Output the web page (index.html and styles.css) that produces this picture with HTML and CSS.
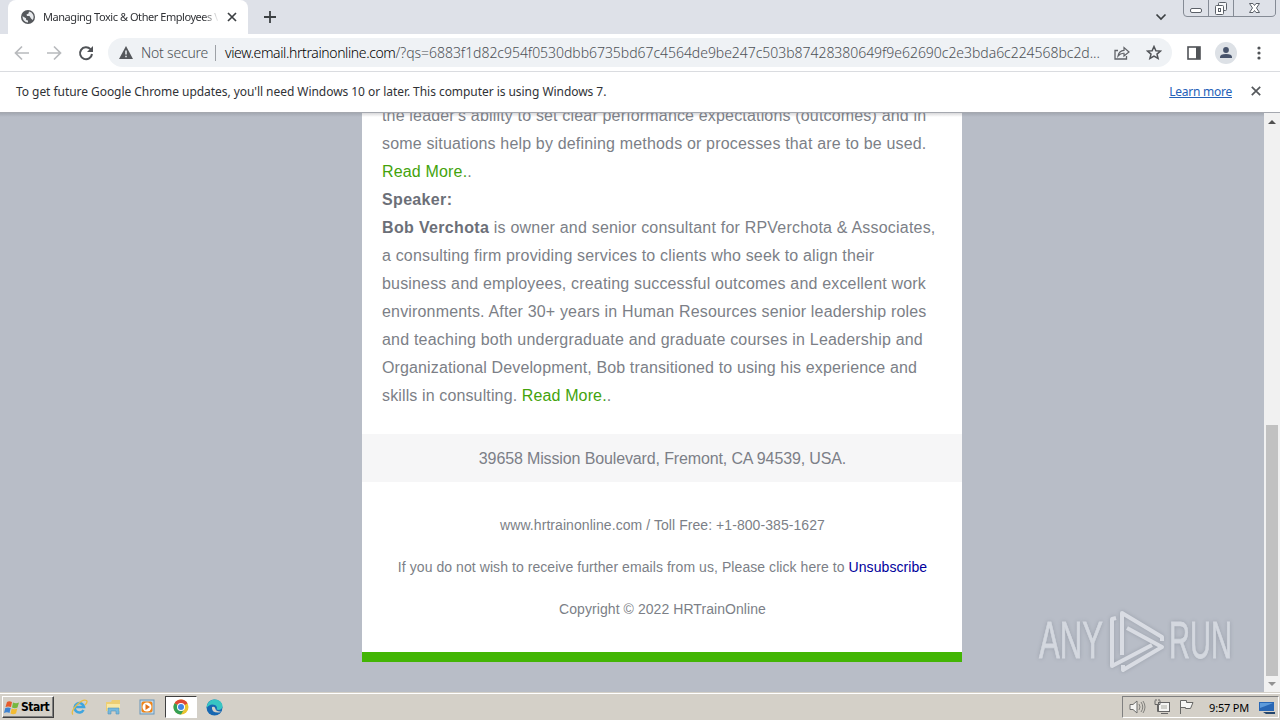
FILE: index.html
```html
<!DOCTYPE html>
<html lang="en">
  <head>
    <meta charset="utf-8" />
    <title>Managing Toxic &amp; Other Employees</title>
    <link rel="stylesheet" href="styles.css">
  </head>
  <body>
    <!-- tab strip -->
    <header class="tabstrip">
      <div class="tab">
        <svg class="globe" width="14" height="14" viewBox="0 0 14 14"><circle cx="7" cy="7" r="7" fill="#55585c"/><path d="M1.6 6.2L5 8.200 5.200 10 7 10.500V12.600A5.600 5.600 0 0 1 1.600 6.200ZM8 1.500L7.500 3.500 5.500 4.500 6 6H8.500L10 8.500 11.700 10A5.600 5.600 0 0 0 8 1.500Z" fill="#e8eaed"/></svg>
        <span class="tab-title">Managing Toxic &amp; Other Employees V</span>
        <svg width="10" height="10" viewBox="0 0 10 10"><path d="M1 1L9 9M9 1L1 9" stroke="#3c4043" stroke-width="1.700"/></svg>
      </div>
      <svg class="new-tab" width="12" height="12" viewBox="0 0 12 12"><path d="M6 0V12M0 6H12" stroke="#3c4043" stroke-width="1.800"/></svg>
      <svg class="tab-search" width="12" height="8" viewBox="0 0 12 8"><path d="M1.500 1.500L6 6L10.500 1.500" fill="none" stroke="#3c4043" stroke-width="1.700"/></svg>
      <svg class="win-buttons" width="94" height="18" viewBox="0 0 94 18">
        <path d="M.5 0V13Q.5 16.500 4 16.500H88Q92.500 16.500 92.500 13V0M25.500 0V16M50.500 0V16" fill="none" stroke="#858b95"/>
        <rect x="7.500" y="8.500" width="11" height="4" rx="1.500" fill="#fff" stroke="#5b6068"/>
        <rect x="35.500" y="2.500" width="8" height="8" rx="1" fill="#f5f6f8" stroke="#5b6068"/>
        <rect x="32.500" y="5.500" width="8" height="9" rx="1" fill="#fff" stroke="#5b6068"/>
        <rect x="35.500" y="8.500" width="2" height="3" fill="none" stroke="#5b6068"/>
        <path d="M66.500 3.500H70L71.500 5.500 73 3.500H76.500L73.500 8 76.500 12.500H73L71.500 10.500 70 12.500H66.500L69.500 8Z" fill="#fff" stroke="#5b6068"/>
      </svg>
    </header>

    <!-- toolbar -->
    <div class="toolbar">
      <svg class="nav" width="90" height="18" viewBox="0 0 90 18">
        <path d="M15 9H2M8 2.500L1.500 9L8 15.500" fill="none" stroke="#b8babd" stroke-width="1.700"/>
        <path d="M33 9H46M40 2.500L46.500 9L40 15.500" fill="none" stroke="#b8babd" stroke-width="1.700"/>
        <path d="M76.500 5.200A6 6 0 1 0 78 10" fill="none" stroke="#505357" stroke-width="2"/><path d="M79 2V8H73Z" fill="#505357"/>
      </svg>
      <div class="omnibox">
        <svg width="14" height="13" viewBox="0 0 14 13"><path d="M7 0L14 13H0Z" fill="#55585c"/><path d="M7 4.500V8.500M7 9.700V11.300" stroke="#f0f3f6" stroke-width="1.500"/></svg>
        <span class="not-secure">Not secure</span>
        <span class="divider"></span>
        <span class="url"><span class="host">view.email.hrtrainonline.com</span><span class="query">/?qs=6883f1d82c954f0530dbb6735bd67c4564de9be247c503b87428380649f9e62690c2e3bda6c224568bc2d...</span></span>
        <svg class="share" width="16" height="14" viewBox="0 0 16 14"><path d="M4 4.500H1V13H12.500V10" fill="none" stroke="#606368" stroke-width="1.300"/><path d="M4 10Q5 4.500 10 4.300V1.500L15 6L10 10V7.300Q6.500 7 4 10Z" fill="none" stroke="#606368" stroke-width="1.200"/></svg>
        <svg class="star" width="16" height="15" viewBox="0 0 16 15"><path d="M8 1.500L9.900 5.700 14.500 6.100 11 9.100 12.100 13.500 8 11.200 3.900 13.500 5 9.100 1.500 6.100 6.100 5.700Z" fill="none" stroke="#505357" stroke-width="1.500"/></svg>
      </div>
      <svg class="panel-icon" width="14" height="14" viewBox="0 0 14 14"><rect x="1" y="1" width="12" height="12" fill="#fff" stroke="#505357" stroke-width="1.600"/><path d="M9 1H13V13H9Z" fill="#505357"/></svg>
      <svg class="avatar" width="22" height="22" viewBox="0 0 22 22"><circle cx="11" cy="11" r="11" fill="#dde1e6"/><circle cx="11" cy="8" r="2.900" fill="#47536b"/><path d="M5 16V15Q5 12 11 12T17 15V16Z" fill="#47536b"/></svg>
      <svg class="dots" width="4" height="14" viewBox="0 0 4 14"><g fill="#505357"><circle cx="2" cy="2" r="1.600"/><circle cx="2" cy="7" r="1.600"/><circle cx="2" cy="12" r="1.600"/></g></svg>
    </div>

    <!-- update notice -->
    <div class="infobar">
      <span class="notice">To get future Google Chrome updates, you'll need Windows 10 or later. This computer is using Windows 7.</span>
      <a class="learn-more">Learn more</a>
      <svg width="10" height="10" viewBox="0 0 10 10"><path d="M.8 .8L9.200 9.200M9.200 .8L.8 9.200" stroke="#55585c" stroke-width="1.700"/></svg>
    </div>

    <main class="viewport">
      <div class="page">
        <div class="mail">
          <div class="mail-body">
            the leader's ability to set clear performance expectations (outcomes) and in<br>
            some situations help by defining methods or processes that are to be used.<br>
            <a class="read-more">Read More.</a>.<br>
            <b>Speaker:</b><br>
            <b>Bob Verchota</b> <span class="loose">is owner and senior consultant for RPVerchota &amp; Associates,</span><br>
            a consulting firm providing services to clients who seek to align their<br>
            business and employees, creating successful outcomes and excellent work<br>
            environments. After 30+ years in Human Resources senior leadership roles<br>
            <span class="loose">and teaching both undergraduate and graduate courses in Leadership and</span><br>
            <span class="tight">Organizational Development, Bob transitioned to using his experience and</span><br>
            <span class="tight">skills in consulting. <a class="read-more">Read More.</a>.</span>
          </div>
          <div class="address">39658 Mission Boulevard, Fremont, CA 94539, USA.</div>
          <div class="mail-footer">
            <p>www.hrtrainonline.com / Toll Free: +1-800-385-1627</p>
            <p>If you do not wish to receive further emails from us, Please click here to <a class="unsubscribe">Unsubscribe</a></p>
            <p>Copyright © 2022 HRTrainOnline</p>
          </div>
        </div>
        <!-- watermark -->
        <div class="watermark">
          <span class="any">ANY</span>
          <svg width="56" height="64" viewBox="0 0 56 64"><g fill="none" stroke="#dfe2e8" stroke-width="4" stroke-linejoin="round"><path d="M12 46V4L52 28V32"/><path d="M6 9L2 10V57L42 36"/><path d="M17 19L52 38L13 61V56"/></g></svg>
          <span class="run">RUN</span>
        </div>
      </div>
      <div class="scrollbar">
        <svg width="8" height="4" viewBox="0 0 8 4"><path d="M0 4L4 0L8 4Z" fill="#505050"/></svg>
        <div class="thumb"></div>
        <svg width="8" height="4" viewBox="0 0 8 4"><path d="M0 0L4 4L8 0Z" fill="#929292"/></svg>
      </div>
    </main>

    <footer class="taskbar">
      <div class="start">
        <svg width="16" height="15" viewBox="0 0 16 15"><path d="M3 2Q5 .5 8 2L7 7Q4 6 1.500 7Z" fill="#e65b2c"/><path d="M9 2.500Q12 4 15 2.500L13.500 7.500Q11 9 8 7.500Z" fill="#76b83f"/><path d="M1.300 8Q4 7 6.700 8L5.500 13Q3 11.500 0 13Z" fill="#3e83d2"/><path d="M7.700 8.500Q10.500 10 13.300 8.500L12 13.500Q9 15 6.500 13.500Z" fill="#f3bb32"/></svg>
        <span>Start</span>
      </div>
      <div class="quick">
        <svg width="17" height="17" viewBox="0 0 17 17"><path d="M12.500 11A4.700 4.700 0 1 1 13 8H4" fill="none" stroke="#3fa5df" stroke-width="2.600"/><path d="M2 15.500C-2 12 11-1 15.500 1.500Q17 3 14 6" fill="none" stroke="#e8bd45" stroke-width="1.300"/></svg>
        <svg width="17" height="17" viewBox="0 0 17 17"><path d="M1 3H6L7 1H15V12H1Z" fill="#edce73"/><path d="M2 5H15V12H2Z" fill="#f8e8a5"/><path d="M3 15V9H14V15H11V12H6V15Z" fill="#76b9df" stroke="#5596b9" stroke-width=".6"/></svg>
        <svg width="17" height="17" viewBox="0 0 17 17"><rect x="1" y="1" width="14" height="14" fill="#bfd9ec" stroke="#6996b9"/><rect x="2.500" y="2.500" width="11" height="11" rx="2" fill="#ef8519"/><circle cx="8" cy="8" r="4.500" fill="#fff"/><path d="M6.500 5L11 8L6.500 11Z" fill="#e0701a"/></svg>
        <div class="task-active">
          <svg width="16" height="16" viewBox="0 0 16 16"><circle cx="8" cy="8" r="7.500" fill="#eac431"/><path d="M8 8L1.500 4.250A7.500 7.500 0 0 1 14.500 4.250Z" fill="#df4936"/><path d="M8 8L1.500 4.250A7.500 7.500 0 0 0 8 15.500L11.200 10Z" fill="#35a055"/><path d="M8 4.250H14.500L8 8Z" fill="#df4936"/><circle cx="8" cy="8" r="4" fill="#fff"/><circle cx="8" cy="8" r="3" fill="#4285e5"/></svg>
        </div>
        <svg width="17" height="17" viewBox="0 0 17 17"><circle cx="8.500" cy="8.500" r="8" fill="#1767b1"/><path d="M.6 9C1 2 6 .3 9 .5C15 1 17 5 16.400 8.500Q15 12 10.500 10.500Q12 8 9 6Q4 4 .6 9Z" fill="#38c5c3"/><path d="M6 8Q5 14 13.500 13.500L15 12.500Q10 13 9.300 9.500Q9 7 6 8Z" fill="#d4d0c8"/></svg>
      </div>
      <div class="tray">
        <svg width="17" height="16" viewBox="0 0 17 16"><path d="M1 5.500H4L8 2V14L4 10.500H1Z" fill="#f5f5f3" stroke="#6e6e6c"/><path d="M10 5Q12 8 10 11M12 3Q15.500 8 12 13M14 2Q18 8 14 14" fill="none" stroke="#777774" stroke-width=".9"/></svg>
        <svg width="16" height="16" viewBox="0 0 16 16"><rect x="4.500" y="3.500" width="11" height="9" fill="#f5f5f3" stroke="#666"/><path d="M7 14.500H14M1 1.500V5.500H6V1.500M3.500 5V12.500H6M2 0V2M5 0V2" fill="none" stroke="#666"/><rect x="7" y="6" width="6" height="4" fill="#cfcfca"/></svg>
        <svg width="17" height="16" viewBox="0 0 17 16"><path d="M2.500 15V1.500H8.500V3.500H15L12.500 9.500H7.500V8.500H3" fill="#f7f7f5" stroke="#686866"/></svg>
        <span class="clock">9:57 PM</span>
        <svg width="16" height="14" viewBox="0 0 16 14"><path d="M0 2H15V11H0Z" fill="#2867b5"/><path d="M1 3H14L1 8Z" fill="#5d9bdb"/><path d="M4 12H16V14H7Z" fill="#23456c"/></svg>
      </div>
    </footer>
  </body>
</html>
```
FILE: styles.css
```css
* {
  box-sizing: border-box;
}
body {
  margin: 0;
  height: 720px;
  display: flex;
  flex-direction: column;
  overflow: hidden;
  font-family: "Noto Sans", sans-serif;
  font-size: 12px;
  color: #303236;
}
svg {
  display: block;
  flex: none;
}
.tabstrip {
  height: 34px;
  flex: none;
  display: flex;
  align-items: center;
  background: #dee1e8;
  padding-left: 8px;
}
.tab {
  width: 240px;
  height: 34px;
  display: flex;
  align-items: center;
  padding: 0 11px 0 13px;
  background: #fff;
  border-radius: 8px 8px 0 0;
}
.tab-title {
  width: 175px;
  margin: -2px 9px 0 8px;
  overflow: hidden;
  white-space: nowrap;
  font-size: 11px;
  letter-spacing: -.45px;
  -webkit-mask-image: linear-gradient(to right, #000 160px, transparent 176px);
}
.new-tab {
  margin-left: 16px;
}
.tab-search {
  margin-left: auto;
}
.win-buttons {
  margin: 0 3px 0 16px;
  align-self: flex-start;
}
.toolbar {
  height: 38px;
  flex: none;
  display: flex;
  align-items: center;
  padding-left: 14px;
  border-bottom: 1px solid #dadce0;
  background: #fff;
}
.omnibox {
  width: 1064px;
  height: 29px;
  margin-left: 4px;
  padding-left: 11px;
  display: flex;
  align-items: center;
  border-radius: 15px;
  background: #eff2f5;
  font-size: 14px;
  font-weight: 300;
  color: #4d5156;
}
.not-secure {
  width: 68px;
  margin-left: 8px;
  white-space: nowrap;
  letter-spacing: -.2px;
}
.divider {
  width: 1px;
  height: 16px;
  margin: 0 9px 0 6px;
  background: #9da1a6;
}
.url {
  width: 878px;
  white-space: nowrap;
}
.host {
  letter-spacing: -.38px;
  color: #000;
}
.query {
  letter-spacing: -.04px;
}
.share {
  margin-left: 11px;
}
.star {
  margin-left: 16px;
}
.panel-icon {
  margin-left: 15px;
}
.avatar {
  margin-left: 14px;
}
.dots {
  margin-left: 20px;
}
.infobar {
  height: 41px;
  flex: none;
  display: flex;
  align-items: center;
  padding: 0 19px 2px 16px;
  background: #fff;
  border-bottom: 1px solid #a5a8af;
}
.notice {
  letter-spacing: -.05px;
}
.learn-more {
  margin: 0 19px 0 auto;
  letter-spacing: -.25px;
  color: #2461b8;
  text-decoration: underline;
}
.viewport {
  height: 579px;
  flex: none;
  display: flex;
  overflow: hidden;
}
.page {
  width: 1264px;
  position: relative;
  overflow: hidden;
  padding-left: 362px;
  background: linear-gradient(#a3a8b1, #b8bdc7 4px);
}
.mail {
  width: 600px;
  height: 549px;
  background: linear-gradient(#d8d8da, #fff 4px);
  border-bottom: 10px solid #43b505;
  font-family: "Liberation Sans", Arial, sans-serif;
  color: #7c7f87;
}
.mail-body {
  display: flow-root;
  height: 321px;
  padding-left: 20px;
  font-size: 16px;
  line-height: 28px;
  letter-spacing: .17px;
  white-space: nowrap;
}
.mail-body::before {
  content: "";
  display: block;
  margin-top: -11px;
}
.mail-body b {
  letter-spacing: .34px;
  color: #6c6f78;
}
.loose {
  letter-spacing: .205px;
}
.tight {
  letter-spacing: .13px;
}
.read-more {
  color: #43a30c;
}
.address {
  height: 48px;
  padding-left: 1px;
  line-height: 49px;
  background: #f6f6f7;
  font-size: 16px;
  letter-spacing: -.13px;
  text-align: center;
}
.mail-footer {
  padding: 22px 0 0 1px;
  text-align: center;
  font-size: 14px;
  line-height: 42px;
  letter-spacing: .065px;
}
.mail-footer p {
  margin: 0;
}
.unsubscribe {
  color: #00009c;
}
.watermark {
  position: absolute;
  left: 1039px;
  top: 496px;
  display: flex;
  align-items: center;
  color: #d9dde4;
  font: 51px/60px "Liberation Sans", sans-serif;
  -webkit-text-stroke: .8px #d9dde4;
  filter: drop-shadow(0 0 2px #959ba6);
  opacity: .85;
}
.watermark span {
  transform-origin: left;
}
.any {
  width: 71px;
  transform: scaleX(.61);
}
.run {
  width: 70px;
  margin-left: 3px;
  transform: scaleX(.57);
}
.scrollbar {
  width: 16px;
  display: flex;
  flex-direction: column;
  align-items: center;
  padding: 7px 0 6px;
  background: #f1f1f1;
}
.thumb {
  width: 12px;
  height: 251px;
  margin: auto 0 6px;
  background: #c1c1c1;
}
.taskbar {
  height: 28px;
  flex: none;
  display: flex;
  align-items: center;
  padding: 2px 1px 0 2px;
  background: #d4d0c8;
  box-shadow: inset 0 1px #d4d0c8, inset 0 2px #fff;
}
.start {
  width: 52px;
  height: 22px;
  display: flex;
  align-items: center;
  gap: 1px;
  padding-left: 1px;
  border: 1px solid;
  border-color: #fff #404040 #404040 #fff;
  box-shadow: inset -1px -1px #808080;
  font: bold 12px "DejaVu Sans Condensed", "DejaVu Sans", sans-serif;
  letter-spacing: -.5px;
  color: #000;
}
.quick {
  display: flex;
  align-items: center;
  margin-left: 17px;
  gap: 17px;
}
.task-active {
  width: 32px;
  height: 22px;
  display: flex;
  align-items: center;
  justify-content: center;
  margin: 0 -8px;
  background: #fff;
  border: 1px solid;
  border-color: #404040 #fff #fff #404040;
}
.tray {
  width: 157px;
  height: 22px;
  display: flex;
  align-items: center;
  gap: 8px;
  margin-left: auto;
  padding: 0 3px 0 6px;
  border: 1px solid;
  border-color: #808080 #fff #fff #808080;
}
.clock {
  margin: 0 2px 0 auto;
  font-size: 11px;
  letter-spacing: -.2px;
  white-space: nowrap;
  color: #000;
}
```
